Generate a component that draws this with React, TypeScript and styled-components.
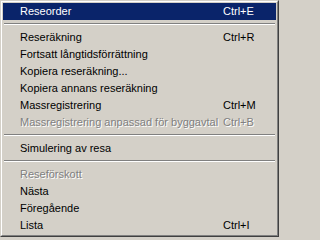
import styled, { createGlobalStyle } from 'styled-components';

type Entry =
  | { kind: 'item'; label: string; shortcut?: string; disabled?: boolean; active?: boolean }
  | { kind: 'sep' };

const entries: Entry[] = [
  { kind: 'item', label: 'Reseorder', shortcut: 'Ctrl+E', active: true },
  { kind: 'sep' },
  { kind: 'item', label: 'Reseräkning', shortcut: 'Ctrl+R' },
  { kind: 'item', label: 'Fortsatt långtidsförrättning' },
  { kind: 'item', label: 'Kopiera reseräkning...' },
  { kind: 'item', label: 'Kopiera annans reseräkning' },
  { kind: 'item', label: 'Massregistrering', shortcut: 'Ctrl+M' },
  { kind: 'item', label: 'Massregistrering anpassad för byggavtal', shortcut: 'Ctrl+B', disabled: true },
  { kind: 'sep' },
  { kind: 'item', label: 'Simulering av resa' },
  { kind: 'sep' },
  { kind: 'item', label: 'Reseförskott', disabled: true },
  { kind: 'item', label: 'Nästa' },
  { kind: 'item', label: 'Föregående' },
  { kind: 'item', label: 'Lista', shortcut: 'Ctrl+I' },
];

function App() {
  return (
    <>
      <GlobalStyle />
      <Menu>
        <Inner>
          {entries.map((e, i) =>
            e.kind === 'sep' ? (
              <Separator key={i} />
            ) : (
              <Item key={i} $active={e.active} $disabled={e.disabled}>
                <Label>{e.label}</Label>
                {e.shortcut && <Shortcut>{e.shortcut}</Shortcut>}
              </Item>
            )
          )}
        </Inner>
      </Menu>
    </>
  );
}

const GlobalStyle = createGlobalStyle`
  html, body {
    margin: 0;
    padding: 0;
    background: #d4d0c8;
  }
`;

const Menu = styled.div`
  width: 279px;
  height: 237px;
  box-sizing: border-box;
  background: #d4d0c8;
  border: 1px solid;
  border-color: #d4d0c8 #404040 #404040 #d4d0c8;
  font-family: 'Liberation Sans', Arial, sans-serif;
  font-size: 11px;
`;

const Inner = styled.div`
  height: 100%;
  box-sizing: border-box;
  border: 1px solid;
  border-color: #ffffff #808080 #808080 #ffffff;
  padding: 1px;
  display: flex;
  flex-direction: column;
`;

const Item = styled.div<{ $active?: boolean; $disabled?: boolean }>`
  height: 17px;
  line-height: 17px;
  display: flex;
  align-items: center;
  padding-left: 17px;
  white-space: nowrap;
  background: ${p => (p.$active ? '#0a246a' : 'transparent')};
  color: ${p => (p.$active ? '#ffffff' : p.$disabled ? '#808080' : '#000000')};
  text-shadow: ${p => (p.$disabled ? '1px 1px 0 #ffffff' : 'none')};
`;

const Label = styled.span`
  width: 203px;
  flex: none;
`;

const Shortcut = styled.span`
  flex: none;
`;

const Separator = styled.div`
  height: 9px;
  box-sizing: border-box;
  padding: 3px 1px 0;

  &::before {
    content: '';
    display: block;
    border-top: 1px solid #808080;
    border-bottom: 1px solid #ffffff;
  }
`;

export default App;
